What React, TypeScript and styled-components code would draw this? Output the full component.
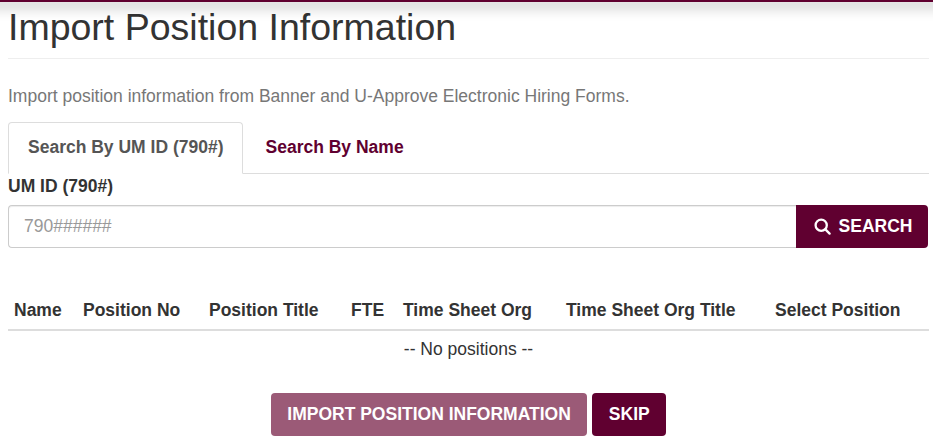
import React from 'react';
import styled, { createGlobalStyle } from 'styled-components';

const GlobalStyle = createGlobalStyle`
  * { box-sizing: border-box; }
  html, body { margin: 0; background: #fff; }
  body {
    font-family: "Liberation Sans", Arial, sans-serif;
    font-size: 17.5px;
    line-height: 1.43;
    color: #333;
    overflow: hidden;
  }
`;

const maroon = '#600030';

const TopBar = styled.div`
  position: fixed;
  top: 0;
  left: -24px;
  right: -24px;
  height: 2px;
  background: ${maroon};
  box-shadow: 0 3px 13px rgba(0, 0, 0, 0.85);
`;

const Page = styled.div`
  padding: 0 4px 0 8px;
  width: 933px;
  height: 440px;
`;

const Heading = styled.h1`
  margin: 0;
  padding: 6px 0 10px;
  height: 59px;
  font-size: 37.5px;
  font-weight: 400;
  line-height: 42px;
  color: #333;
  border-bottom: 1px solid #eee;
`;

const Intro = styled.p`
  margin: 0;
  padding-top: 25px;
  height: 63px;
  color: #777;
`;

const TabList = styled.ul`
  display: flex;
  list-style: none;
  margin: 0;
  padding: 0;
  height: 52px;
  border-bottom: 1px solid #ddd;
`;

const Tab = styled.li<{ $active?: boolean }>`
  height: 52px;
  padding: 12px 18px 0 19px;
  margin-right: 3px;
  font-weight: 700;
  color: ${(p) => (p.$active ? '#555' : maroon)};
  background: ${(p) => (p.$active ? '#fff' : 'transparent')};
  border: 1px solid ${(p) => (p.$active ? '#ddd' : 'transparent')};
  border-bottom-color: ${(p) => (p.$active ? '#fff' : 'transparent')};
  border-radius: 4px 4px 0 0;
`;

const FieldLabel = styled.label`
  display: block;
  height: 31px;
  font-weight: 700;
`;

const SearchGroup = styled.div`
  display: flex;
  height: 43px;
  margin-right: 1px;
`;

const SearchInput = styled.input`
  flex: 1;
  min-width: 0;
  height: 43px;
  padding: 0 15px;
  font: inherit;
  color: #555;
  background: #fff;
  border: 1px solid #ccc;
  border-right: 0;
  border-radius: 4px 0 0 4px;
  box-shadow: inset 0 1px 1px rgba(0, 0, 0, 0.075);
  &::placeholder { color: #999; opacity: 1; }
`;

const Button = styled.button<{ $faded?: boolean }>`
  display: inline-flex;
  align-items: center;
  justify-content: center;
  gap: 8px;
  font-family: inherit;
  font-size: 17.5px;
  font-weight: 700;
  color: #fff;
  background: ${(p) => (p.$faded ? '#9b5a77' : maroon)};
  border: 0;
  border-radius: 4px;
`;

const SearchButton = styled(Button)`
  width: 132px;
  height: 43px;
  padding: 0 0 0 2px;
  border-radius: 0 4px 4px 0;
`;

const SearchIcon = styled.svg`
  width: 17px;
  height: 17px;
  fill: none;
  stroke: #fff;
  stroke-width: 2.3;
  stroke-linecap: round;
`;

const PositionTable = styled.table`
  width: 921px;
  margin-top: 43px;
  border-collapse: collapse;
  table-layout: fixed;
`;

const Column = styled.col<{ $w: number }>`
  width: ${(p) => p.$w}px;
`;

const HeadCell = styled.th`
  height: 39px;
  padding: 1px 7px 0;
  text-align: left;
  font-weight: 700;
  white-space: nowrap;
  border-bottom: 2px solid #ddd;

  &:first-child {
    padding-left: 6px;
  }
`;

const EmptyCell = styled.td`
  height: 37px;
  padding: 2px 0 0;
  text-align: center;
`;

const Actions = styled.div`
  display: flex;
  justify-content: center;
  gap: 5px;
  margin-top: 26px;
`;

const ActionButton = styled(Button)`
  height: 43px;
  padding: 0 16.5px;
`;

const columns = [
  { title: 'Name', width: 68 },
  { title: 'Position No', width: 126 },
  { title: 'Position Title', width: 142 },
  { title: 'FTE', width: 52 },
  { title: 'Time Sheet Org', width: 163 },
  { title: 'Time Sheet Org Title', width: 209 },
  { title: 'Select Position', width: 161 },
];

export default function App() {
  return (
    <>
      <GlobalStyle />
      <TopBar />
      <Page>
        <Heading>Import Position Information</Heading>
        <Intro>Import position information from Banner and U-Approve Electronic Hiring Forms.</Intro>
        <TabList>
          <Tab $active>Search By UM ID (790#)</Tab>
          <Tab>Search By Name</Tab>
        </TabList>
        <FieldLabel htmlFor="umid">UM ID (790#)</FieldLabel>
        <SearchGroup>
          <SearchInput id="umid" placeholder="790######" />
          <SearchButton>
            <SearchIcon viewBox="0 0 17 17">
              <circle cx="7.2" cy="7.2" r="5.6" />
              <path d="M11.4 11.4 15.6 15.6" />
            </SearchIcon>
            SEARCH
          </SearchButton>
        </SearchGroup>
        <PositionTable>
          <colgroup>
            {columns.map((c) => (
              <Column key={c.title} $w={c.width} />
            ))}
          </colgroup>
          <thead>
            <tr>
              {columns.map((c) => (
                <HeadCell key={c.title}>{c.title}</HeadCell>
              ))}
            </tr>
          </thead>
          <tbody>
            <tr>
              <EmptyCell colSpan={7}>-- No positions --</EmptyCell>
            </tr>
          </tbody>
        </PositionTable>
        <Actions>
          <ActionButton $faded>IMPORT POSITION INFORMATION</ActionButton>
          <ActionButton>SKIP</ActionButton>
        </Actions>
      </Page>
    </>
  );
}
